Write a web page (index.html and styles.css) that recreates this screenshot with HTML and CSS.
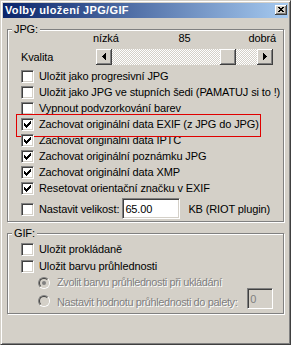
FILE: index.html
```html
<!DOCTYPE html>
<html lang="cs">
<head>
<meta charset="utf-8">
<title>Volby uložení JPG/GIF</title>
<link rel="stylesheet" href="styles.css">
</head>
<body>
<div class="window">
  <div class="titlebar">
    <span class="title">Volby uložení JPG/GIF</span>
    <span class="close"><svg width="6" height="5" viewBox="0 0 6 5" shape-rendering="crispEdges"><path fill="#000" d="M0 0h2v1h-2z M4 0h2v1h-2z M1 1h4v1h-4z M2 2h2v1h-2z M1 3h4v1h-4z M0 4h2v1h-2z M4 4h2v1h-2z"/></svg></span>
  </div>
  <div class="content">
    <div class="group jpg">
      <span class="group-title">JPG:</span>
      <div class="scale"><span>nízká</span><span>85</span><span class="end">dobrá</span></div>
      <div class="quality-row">
        <span class="q-label">Kvalita</span>
        <div class="scrollbar">
          <span class="sbtn"><svg width="4" height="7" viewBox="0 0 4 7" shape-rendering="crispEdges"><path fill="#000" d="M0 3h1v1h-1z M1 2h1v3h-1z M2 1h1v5h-1z M3 0h1v7h-1z"/></svg></span>
          <span class="track"><span class="thumb" style="margin-left:108px"></span></span>
          <span class="sbtn"><svg width="4" height="7" viewBox="0 0 4 7" shape-rendering="crispEdges"><path fill="#000" d="M3 3h1v1h-1z M2 2h1v3h-1z M1 1h1v5h-1z M0 0h1v7h-1z"/></svg></span>
        </div>
      </div>
      <div class="rows">
        <div class="check"><span class="box"></span><span class="lbl">Uložit jako progresivní JPG</span></div>
        <div class="check"><span class="box"></span><span class="lbl">Uložit jako JPG ve stupních šedi (PAMATUJ si to !)</span></div>
        <div class="check"><span class="box"></span><span class="lbl">Vypnout podvzorkování barev</span></div>
        <div class="check marked"><span class="box"><svg class="tick" width="13" height="13" viewBox="0 0 13 13" shape-rendering="crispEdges"><path fill="#000" d="M3 5h1v3h-1z M4 6h1v3h-1z M5 7h1v3h-1z M6 6h1v3h-1z M7 5h1v3h-1z M8 4h1v3h-1z M9 3h1v3h-1z"/></svg></span><span class="lbl">Zachovat originální data EXIF (z JPG do JPG)</span></div>
        <div class="check"><span class="box"><svg class="tick" width="13" height="13" viewBox="0 0 13 13" shape-rendering="crispEdges"><path fill="#000" d="M3 5h1v3h-1z M4 6h1v3h-1z M5 7h1v3h-1z M6 6h1v3h-1z M7 5h1v3h-1z M8 4h1v3h-1z M9 3h1v3h-1z"/></svg></span><span class="lbl">Zachovat originální data IPTC</span></div>
        <div class="check"><span class="box"><svg class="tick" width="13" height="13" viewBox="0 0 13 13" shape-rendering="crispEdges"><path fill="#000" d="M3 5h1v3h-1z M4 6h1v3h-1z M5 7h1v3h-1z M6 6h1v3h-1z M7 5h1v3h-1z M8 4h1v3h-1z M9 3h1v3h-1z"/></svg></span><span class="lbl">Zachovat originální poznámku JPG</span></div>
        <div class="check"><span class="box"><svg class="tick" width="13" height="13" viewBox="0 0 13 13" shape-rendering="crispEdges"><path fill="#000" d="M3 5h1v3h-1z M4 6h1v3h-1z M5 7h1v3h-1z M6 6h1v3h-1z M7 5h1v3h-1z M8 4h1v3h-1z M9 3h1v3h-1z"/></svg></span><span class="lbl">Zachovat originální data XMP</span></div>
        <div class="check"><span class="box"><svg class="tick" width="13" height="13" viewBox="0 0 13 13" shape-rendering="crispEdges"><path fill="#000" d="M3 5h1v3h-1z M4 6h1v3h-1z M5 7h1v3h-1z M6 6h1v3h-1z M7 5h1v3h-1z M8 4h1v3h-1z M9 3h1v3h-1z"/></svg></span><span class="lbl">Resetovat orientační značku v EXIF</span></div>
      </div>
      <div class="size-row">
        <span class="box"></span><span class="lbl">Nastavit velikost:</span>
        <input class="field size" type="text" value="65.00">
        <span class="lbl unit">KB (RIOT plugin)</span>
      </div>
    </div>
    <div class="group gif">
      <span class="group-title">GIF:</span>
      <div class="check"><span class="box"></span><span class="lbl">Uložit prokládaně</span></div>
      <div class="check second"><span class="box"></span><span class="lbl">Uložit barvu průhlednosti</span></div>
      <div class="opt first"><span class="radio"><span class="ring"><span class="dot"></span></span></span><span class="lbl dis">Zvolit barvu průhlednosti při ukládání</span></div>
      <div class="opt last"><span class="radio"><span class="ring"></span></span><span class="lbl dis">Nastavit hodnotu průhlednosti do palety:</span><input class="field idx" type="text" value="0" disabled></div>
    </div>
  </div>
</div>
</body>
</html>
```

FILE: styles.css
```css
* { box-sizing: border-box; }
html, body { margin: 0; padding: 0; }
body {
  background: #d4d0c8;
  font-family: "Liberation Sans", Arial, sans-serif;
  font-size: 11px;
  line-height: 13px;
  color: #000;
  letter-spacing: -0.12px;
}
.window {
  width: 291px;
  height: 345px;
  background: #d4d0c8;
  border: 1px solid;
  border-color: #d4d0c8 #404040 #404040 #d4d0c8;
  box-shadow: inset 1px 1px 0 #fff, inset -1px -1px 0 #808080;
  padding: 2px;
  display: flex;
  flex-direction: column;
}
.titlebar {
  height: 15px;
  flex: none;
  display: flex;
  align-items: center;
  justify-content: space-between;
  padding: 0 1px 0 2px;
  background: linear-gradient(to right, #0a246a, #a6caf0);
  color: #fff;
  font-weight: bold;
  letter-spacing: 0.35px;
}
.close {
  align-self: flex-start;
  margin-top: 2px;
  width: 12px;
  height: 10px;
  background: #d4d0c8;
  box-shadow: inset -1px -1px 0 #404040, inset 1px 1px 0 #fff, inset -2px -2px 0 #808080;
  display: flex;
  align-items: center;
  justify-content: center;
  padding: 0 1px 1px 0;
}
.close svg { display: block; }
.content {
  padding: 0 4px;
  display: flex;
  flex-direction: column;
}
.group {
  position: relative;
  margin-top: 11px;
  border: 1px solid #808080;
  box-shadow: 1px 1px 0 #fff, inset 1px 1px 0 #fff;
  padding-left: 13px;
}
.group-title {
  position: absolute;
  top: -7px;
  left: 4px;
  padding: 0 2px;
  background: #d4d0c8;
  line-height: 13px;
}
.jpg { padding-top: 2px; padding-bottom: 2px; }
.scale {
  margin-left: 72px;
  width: 183px;
  height: 13px;
  display: grid;
  grid-template-columns: 1fr auto 1fr;
}
.scale .end { justify-self: end; }
.quality-row {
  margin-top: 4px;
  height: 16px;
  display: flex;
  align-items: center;
}
.q-label { width: 75px; }
.scrollbar {
  width: 177px;
  height: 16px;
  display: flex;
}
.sbtn, .thumb {
  width: 16px;
  height: 16px;
  flex: none;
  background: #d4d0c8;
  box-shadow: inset -1px -1px 0 #404040, inset 1px 1px 0 #fff, inset -2px -2px 0 #808080;
}
.sbtn {
  display: flex;
  align-items: center;
  justify-content: center;
  padding: 0 1px 1px 0;
}
.sbtn svg { display: block; }
.track {
  flex: 1;
  display: flex;
  background: repeating-conic-gradient(#fff 0 25%, #d4d0c8 0 50%) 0 0 / 2px 2px;
}
.rows { margin-top: 4px; }
.check {
  height: 16px;
  display: flex;
  align-items: flex-start;
  gap: 5px;
}
.check .lbl, .size-row .lbl { margin-top: 1px; }
.box {
  position: relative;
  width: 13px;
  height: 13px;
  flex: none;
  margin-top: 1px;
  background: #fff;
  border: 1px solid;
  border-color: #808080 #fff #fff #808080;
  box-shadow: inset 1px 1px 0 #404040, inset -1px -1px 0 #d4d0c8;
}
.tick {
  position: absolute;
  left: -1px;
  top: -1px;
  display: block;
}
.marked { position: relative; }
.marked::after {
  content: "";
  position: absolute;
  left: -5px;
  top: -3px;
  width: 243px;
  height: 21px;
  border: 1px solid #e00000;
  pointer-events: none;
}
.size-row {
  margin-top: 1px;
  height: 21px;
  display: flex;
  align-items: center;
  gap: 5px;
}
.size-row .box { margin-top: 2px; }
.field {
  height: 21px;
  margin: 0;
  font: inherit;
  letter-spacing: inherit;
  color: #000;
  background: #fff;
  border: 1px solid;
  border-color: #808080 #fff #fff #808080;
  box-shadow: inset 1px 1px 0 #404040, inset -1px -1px 0 #d4d0c8;
  padding: 0 1px 0 2px;
  outline: none;
  border-radius: 0;
  -webkit-appearance: none;
  appearance: none;
}
.size { width: 58px; margin-left: -2px; }
.unit { margin-left: 3px; }
.gif { padding-top: 8px; padding-bottom: 4px; }
.check.second { margin-top: 1px; }
.opt {
  display: flex;
  align-items: flex-start;
  padding-left: 17px;
  gap: 7px;
}
.opt.first { margin-top: 1px; height: 12px; }
.opt.first .radio { margin-top: 1px; }
.opt.last { height: 21px; }
.opt.last .radio { margin-top: 7px; }
.opt.last .lbl { margin-top: 8px; }
.radio {
  width: 12px;
  height: 12px;
  flex: none;
  border-radius: 50%;
  border: 1px solid;
  border-color: #808080 #fff #fff #808080;
}
.ring {
  display: flex;
  align-items: center;
  justify-content: center;
  width: 10px;
  height: 10px;
  border-radius: 50%;
  border: 1px solid;
  border-color: #404040 #d4d0c8 #d4d0c8 #404040;
  background: #d4d0c8;
}
.dot {
  width: 4px;
  height: 4px;
  border-radius: 50%;
  background: #808080;
}
.dis {
  color: #808080;
  text-shadow: 1px 1px 0 #fff;
  letter-spacing: -0.4px;
}
.idx {
  width: 26px;
  margin-left: 3px;
  background: #d4d0c8;
  color: #808080;
  -webkit-text-fill-color: #808080;
  opacity: 1;
}
```
